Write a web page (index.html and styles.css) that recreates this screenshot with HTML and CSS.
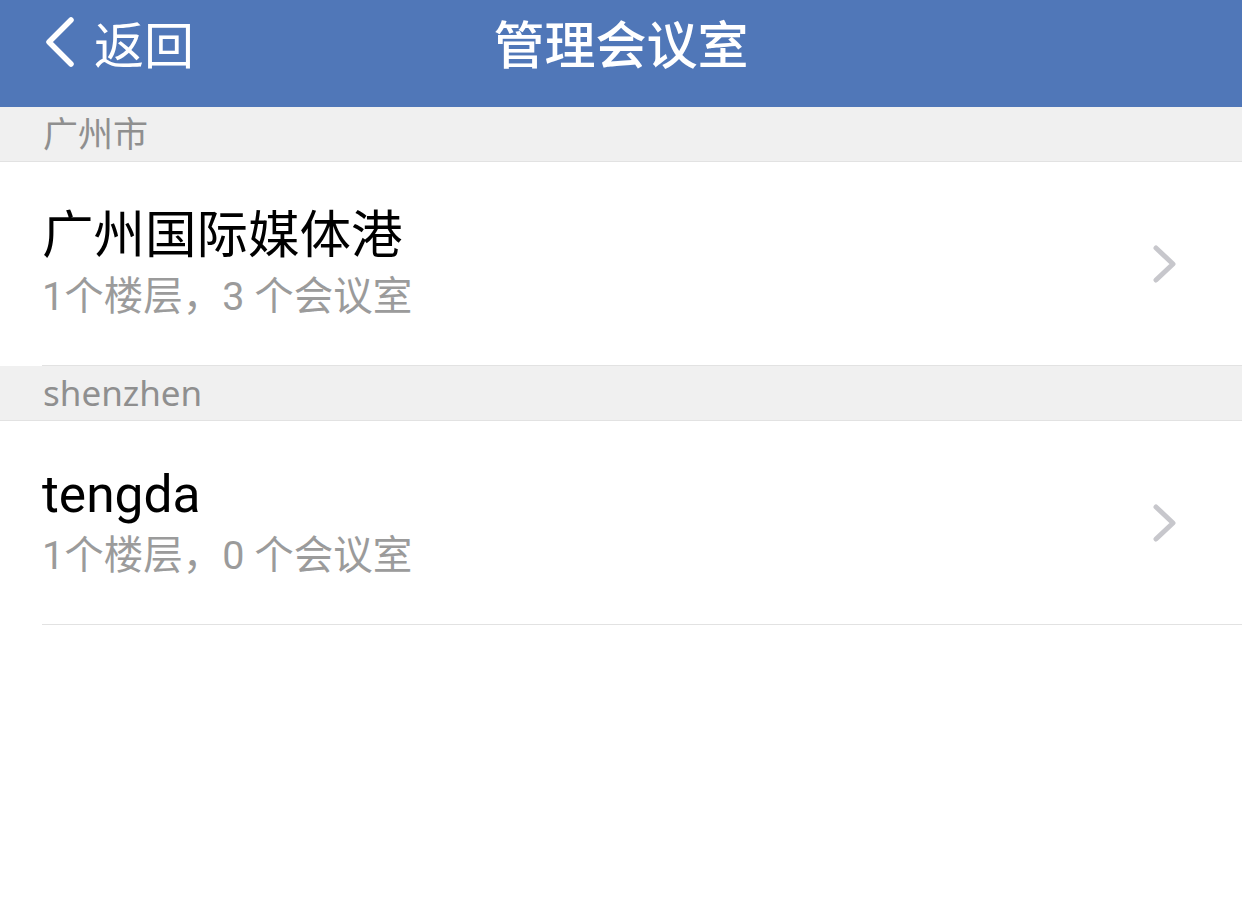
FILE: index.html
```html
<!DOCTYPE html>
<html lang="zh-CN">
<head>
<meta charset="utf-8">
<title>管理会议室</title>
<link rel="stylesheet" href="styles.css">
</head>
<body>
<header class="navbar">
  <div class="nav-left">
    <svg class="back-icon" width="36" height="52" viewBox="0 0 36 52" aria-hidden="true">
      <path d="M29 4 L7 26 L29 48" fill="none" stroke="#ffffff" stroke-width="5.5" stroke-linecap="round" stroke-linejoin="round"/>
    </svg>
    <span class="back-text">返回</span>
  </div>
  <div class="nav-title">管理会议室</div>
  <div class="nav-right"></div>
</header>

<section class="group">
  <div class="group-header">广州市</div>
  <div class="row">
    <div class="row-text">
      <div class="row-title">广州国际媒体港</div>
      <div class="row-sub">1个楼层，3 个会议室</div>
    </div>
    <svg class="chevron" width="26" height="40" viewBox="0 0 26 40" aria-hidden="true">
      <path d="M4 4 L21 20 L4 36" fill="none" stroke="#c7c7cc" stroke-width="5" stroke-linecap="round" stroke-linejoin="round"/>
    </svg>
  </div>
</section>

<section class="group">
  <div class="group-header">shenzhen</div>
  <div class="row">
    <div class="row-text">
      <div class="row-title">tengda</div>
      <div class="row-sub">1个楼层，0 个会议室</div>
    </div>
    <svg class="chevron" width="26" height="40" viewBox="0 0 26 40" aria-hidden="true">
      <path d="M4 4 L21 20 L4 36" fill="none" stroke="#c7c7cc" stroke-width="5" stroke-linecap="round" stroke-linejoin="round"/>
    </svg>
  </div>
</section>
</body>
</html>
```

FILE: styles.css
```css
* { box-sizing: border-box; }

html, body {
  margin: 0;
  padding: 0;
  background: #ffffff;
  font-family: "Noto Sans", "Noto Sans CJK SC", sans-serif;
}

.navbar {
  height: 107px;
  background: #5077b8;
  color: #ffffff;
  display: grid;
  grid-template-columns: 1fr auto 1fr;
  align-items: start;
}

.nav-left {
  display: flex;
  align-items: center;
  height: 84px;
  padding-left: 42px;
  gap: 16px;
}

.back-icon {
  display: block;
}

.back-text {
  font-family: "Noto Sans CJK SC", sans-serif;
  font-size: 50px;
  line-height: 84px;
  font-weight: 400;
}

.nav-title {
  font-family: "Noto Sans CJK SC", sans-serif;
  font-size: 51px;
  line-height: 84px;
  font-weight: 500;
}

.group-header {
  height: 55px;
  background: #f0f0f0;
  border-bottom: 1px solid #e2e2e2;
  color: #8f8f8f;
  font-size: 35px;
  line-height: 54px;
  padding-left: 43px;
}

.row {
  margin-left: 42px;
  height: 204px;
  border-bottom: 1px solid #e2e2e2;
  display: flex;
  align-items: center;
  padding-right: 64px;
}

.row-text {
  flex: 1;
  display: flex;
  flex-direction: column;
  gap: 8px;
}

.row-title {
  color: #000000;
  font-family: Roboto, "Noto Sans CJK SC", sans-serif;
  font-size: 51.5px;
  line-height: 58px;
}

.row-sub {
  color: #9b9b9b;
  font-family: Roboto, "Noto Sans CJK SC", sans-serif;
  font-size: 39.5px;
  line-height: 48px;
}

.chevron {
  display: block;
}
```
